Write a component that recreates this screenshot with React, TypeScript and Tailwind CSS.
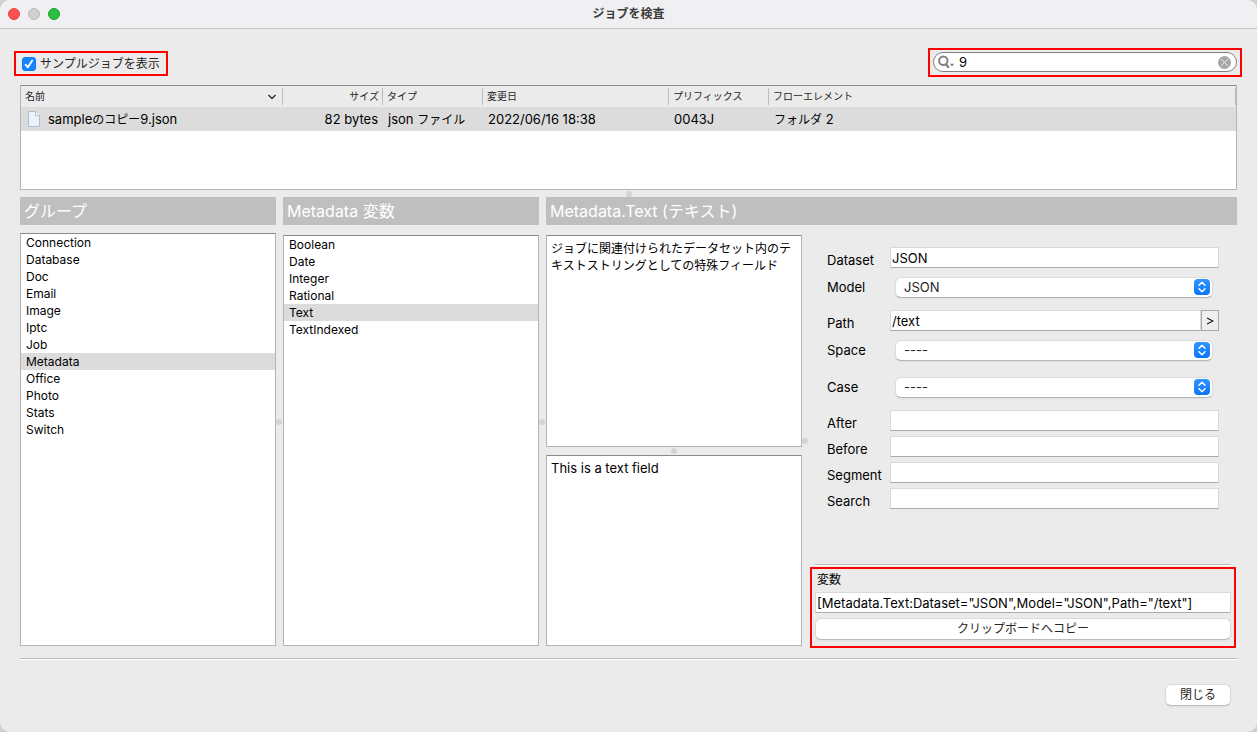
import { useState } from 'react';
import type { ReactNode } from 'react';

const groups = [
  'Connection', 'Database', 'Doc', 'Email', 'Image', 'Iptc',
  'Job', 'Metadata', 'Office', 'Photo', 'Stats', 'Switch',
];

const variables = ['Boolean', 'Date', 'Integer', 'Rational', 'Text', 'TextIndexed'];

const columns = [
  { label: '名前', width: 'w-[262px]' },
  { label: 'サイズ', width: 'w-[100px]' },
  { label: 'タイプ', width: 'w-[100px]' },
  { label: '変更日', width: 'w-[186px]' },
  { label: 'プリフィックス', width: 'w-[100px]' },
  { label: 'フローエレメント', width: '' },
];

const panel = 'bg-white border border-[#b4b4b4] border-t-[#8c8c8c]';
const field = 'h-[21px] min-w-0 bg-white border border-[#d9d9d9] border-b-[#ababab] px-px text-[13px] outline-none';
const pushButton =
  'h-[22px] rounded-md bg-white border border-[#dadada] border-b-[#b9b9b9] text-[12px] leading-4 text-[#262626] shadow-xs';

const Dot = () => <span className="size-1.5 shrink-0 rounded-full bg-[#d4d4d4]" />;

const VerticalSplitter = () => (
  <div className="w-[7px] shrink-0 flex items-center justify-start cursor-col-resize">
    <Dot />
  </div>
);

const PanelTitle = ({ children }: { children: ReactNode }) => (
  <h2 className="h-7 shrink-0 bg-[#bfbfbf] px-1 text-[16px] leading-7 text-white truncate">{children}</h2>
);

// Kana is set one size smaller than the Latin text beside it
const Kana = ({ children }: { children: ReactNode }) => <span className="text-[12px]">{children}</span>;

type ListProps = {
  label: string;
  items: string[];
  selected: string;
  onSelect: (item: string) => void;
};

const List = ({ label, items, selected, onSelect }: ListProps) => (
  <ul aria-label={label} className={`flex-1 text-[12px] leading-[17px] ${panel}`}>
    {items.map((item) => (
      <li key={item}>
        <button
          type="button"
          onClick={() => onSelect(item)}
          className={`block w-full px-[5px] text-left ${item === selected ? 'bg-[#dcdcdc]' : ''}`}
        >
          {item}
        </button>
      </li>
    ))}
  </ul>
);

const TextRow = ({ label, value = '', more = false }: { label: string; value?: string; more?: boolean }) => {
  const id = label.toLowerCase();
  return (
    <div className="flex items-center h-[21px]">
      <label htmlFor={id} className="w-[63px] shrink-0 pt-[5px]">{label}</label>
      <input id={id} type="text" defaultValue={value} className={`flex-1 ${field}`} />
      {more && (
        <button
          type="button"
          aria-label="Build path"
          className="w-[18px] h-[21px] flex items-center justify-center border border-[#a8a8a8] bg-[#efefef]"
        >
          <svg width="8" height="8" viewBox="0 0 8 8" fill="none" stroke="#111" strokeWidth="1.1">
            <path d="M1 1l6 3-6 3" />
          </svg>
        </button>
      )}
    </div>
  );
};

const SelectRow = ({ label, value }: { label: string; value: string }) => {
  const id = label.toLowerCase();
  return (
    <div className="flex items-center h-[21px]">
      <label htmlFor={id} className="w-[68px] shrink-0 pb-px">{label}</label>
      <div className="relative flex-1 mr-1.5">
        <select
          id={id}
          defaultValue={value}
          className="block w-full h-[21px] appearance-none rounded-md bg-white border border-[#dcdcdc] border-b-[#b5b5b5] px-2 text-[13px] leading-[19px] text-[#262626] shadow-xs outline-none"
        >
          <option>{value}</option>
        </select>
        <span className="absolute right-[3px] top-[2px] size-4 rounded bg-gradient-to-b from-[#2f95ff] to-[#0a74f9] pointer-events-none">
          <svg width="16" height="16" viewBox="0 0 16 16" fill="none" stroke="white" strokeWidth="1.5" strokeLinecap="round" strokeLinejoin="round">
            <path d="M5 6.2L8 3.3l3 2.9M5 9.8l3 2.9 3-2.9" />
          </svg>
        </span>
      </div>
    </div>
  );
};

const App = () => {
  const [showSamples, setShowSamples] = useState(true);
  const [query, setQuery] = useState('9');
  const [group, setGroup] = useState('Metadata');
  const [variable, setVariable] = useState('Text');

  return (
    <div className="min-h-screen flex bg-[#cfcfcf] font-['Inter','Noto_Sans_CJK_JP',sans-serif] text-black">
      <div className="flex-1 min-w-0 flex flex-col rounded-[10px] bg-[#ebebeb] overflow-hidden">
        <header className="h-[29px] shrink-0 grid grid-cols-3 items-center border-b border-[#c3c3c3] bg-[#f0eff1] px-2">
          <div className="flex gap-2">
            <button type="button" aria-label="閉じる" className="size-3 rounded-full border border-[#e0443e] bg-[#fe5050]" />
            <button type="button" aria-label="しまう" className="size-3 rounded-full border border-[#b9b9bb] bg-[#d1d0d2]" />
            <button type="button" aria-label="拡大" className="size-3 rounded-full border border-[#1f9f31] bg-[#2ac040]" />
          </div>
          <h1 className="text-center text-[12px] leading-4 font-bold text-[#3c3c3c]">ジョブを検査</h1>
        </header>

        <div className="flex items-end justify-between pl-3.5 pr-[15px] pt-[19px]">
          <label className="h-[25px] mb-px flex items-center gap-1 border-2 border-[#ff0000] pl-1.5 pr-1.5 text-[12px] text-[#262626]">
            <input
              type="checkbox"
              checked={showSamples}
              onChange={(e) => setShowSamples(e.target.checked)}
              className="peer sr-only"
            />
            <span className="size-3.5 rounded-[3px] border border-[#b5b5b5] bg-white peer-checked:border-[#0a7aff] peer-checked:bg-[#1785ff]">
              <svg width="12" height="12" viewBox="0 0 12 12" fill="none" stroke="white" strokeWidth="1.8" strokeLinecap="round" strokeLinejoin="round">
                <path d="M2.6 6.6l2.3 2.7L9.2 2.6" />
              </svg>
            </span>
            サンプルジョブを表示
          </label>

          <div className="w-[314px] border-2 border-[#ff0000] px-[3px] pt-[2px] pb-[3px]">
            <div className="h-5 flex items-center rounded-full border border-[#808080] bg-white pl-1 pr-[5px]">
              <svg width="18" height="14" viewBox="0 0 18 14" fill="none" className="shrink-0">
                <circle cx="5.3" cy="5.8" r="4.2" stroke="#808080" strokeWidth="2" />
                <path d="M7.800 9l3 3.800" stroke="#808080" strokeWidth="2.2" />
                <path d="M12 8.800h4.200L14 11.400z" fill="#808080" />
              </svg>
              <input
                type="text"
                aria-label="検索"
                value={query}
                onChange={(e) => setQuery(e.target.value)}
                className="flex-1 min-w-0 pl-[3px] text-[13px] leading-4 outline-none"
              />
              <button type="button" aria-label="クリア" onClick={() => setQuery('')}>
                <svg width="13" height="13" viewBox="0 0 13 13" className="block">
                  <circle cx="6.5" cy="6.5" r="6.5" fill="#a6a6a6" />
                  <path d="M3.2 3.2l6.6 6.6M9.8 3.2L3.2 9.8" stroke="#f2f2f2" />
                </svg>
              </button>
            </div>
          </div>
        </div>

        <main className="flex-1 flex flex-col px-5 pt-2">
          <div className={`h-[105px] shrink-0 ${panel}`}>
            <table className="w-full table-fixed border-collapse">
              <thead>
                <tr className="h-[21px] bg-[#ebebeb]">
                  {columns.map((col, i) => (
                    <th key={col.label} scope="col" className={`p-0 align-middle ${col.width}`}>
                      <div
                        className={`h-[17px] flex items-center border-r border-[#bcbcbc] pl-1 pr-[3px] text-[10px] font-normal text-[#262626] ${
                          i === 1 ? 'justify-end' : 'justify-between'
                        }`}
                      >
                        {col.label}
                        {i === 0 && (
                          <svg width="14" height="8" viewBox="0 0 14 8" fill="none" stroke="#333" strokeWidth="1.5">
                            <path d="M3.5 2L7 5.5 10.5 2" />
                          </svg>
                        )}
                      </div>
                    </th>
                  ))}
                </tr>
              </thead>
              <tbody className="text-[13px] leading-5 whitespace-nowrap">
                <tr className="h-6 bg-[#dcdcdc]">
                  <td className="p-0">
                    <div className="flex items-center gap-2 pl-[7px]">
                      <svg width="12" height="16" viewBox="0 0 12 16" fill="#eaf3fd" stroke="#b3bbc6">
                        <path d="M.5.5h7l4 4v11H.5z" />
                        <path d="M7.5.5v4h4" fill="white" />
                      </svg>
                      <span>sample<Kana>のコピー</Kana>9.json</span>
                    </div>
                  </td>
                  <td className="p-0 pr-[5px] text-right">82 bytes</td>
                  <td className="p-0 pl-[5px]">json <Kana>ファイル</Kana></td>
                  <td className="p-0 pl-[5px]">2022/06/16 18:38</td>
                  <td className="p-0 pl-[5px]">0043J</td>
                  <td className="p-0 pl-[5px]"><Kana>フォルダ</Kana> 2</td>
                </tr>
              </tbody>
            </table>
          </div>

          <div className="h-[7px] shrink-0 flex items-center justify-center cursor-row-resize">
            <Dot />
          </div>

          <div className="flex-1 flex">
            <section className="w-64 shrink-0 flex flex-col gap-2">
              <PanelTitle>グループ</PanelTitle>
              <List label="グループ" items={groups} selected={group} onSelect={setGroup} />
            </section>

            <VerticalSplitter />

            <section className="w-64 shrink-0 flex flex-col gap-2.5">
              <PanelTitle>Metadata 変数</PanelTitle>
              <List label="Metadata 変数" items={variables} selected={variable} onSelect={setVariable} />
            </section>

            <VerticalSplitter />

            <section className="flex-1 min-w-0 flex flex-col gap-2.5">
              <PanelTitle>Metadata.Text (テキスト)</PanelTitle>
              <div className="flex-1 flex">
                <div className="w-64 shrink-0 flex flex-col">
                  <div className={`flex-[212] px-1 pt-1 text-[12px] leading-[17px] ${panel}`}>
                    ジョブに関連付けられたデータセット内のテキストストリングとしての特殊フィールド
                  </div>
                  <div className="h-2 shrink-0 flex items-center justify-center cursor-row-resize">
                    <Dot />
                  </div>
                  <div className={`flex-[190] px-1 pt-1 text-[13px] leading-[17px] ${panel}`}>
                    This is a text field
                  </div>
                </div>

                <VerticalSplitter />

                <div className="flex-1 min-w-0 flex flex-col">
                  <form className="flex flex-col gap-3 pl-[18px] pr-[18px] pt-3 text-[13px] leading-4">
                    <div className="flex flex-col gap-[9px]">
                      <TextRow label="Dataset" value="JSON" />
                      <SelectRow label="Model" value="JSON" />
                    </div>
                    <div className="flex flex-col gap-[9px]">
                      <TextRow label="Path" value="/text" more />
                      <SelectRow label="Space" value="----" />
                    </div>
                    <div className="pt-1">
                      <SelectRow label="Case" value="----" />
                    </div>
                    <div className="flex flex-col gap-[5px]">
                      <TextRow label="After" />
                      <TextRow label="Before" />
                      <TextRow label="Segment" />
                      <TextRow label="Search" />
                    </div>
                  </form>

                  <div className="mt-auto ml-1.5 mr-1.5 mb-px border-t border-[#b9b9b9] border-b border-b-white" />
                  <div className="-mb-0.5 ml-px mr-px flex flex-col gap-[5px] border-2 border-[#ff0000] px-[3px] pb-1.5 text-[12px]">
                    <div className="flex flex-col">
                      <label htmlFor="variable" className="h-[23px] px-0.5 leading-[22px]">変数</label>
                      <input
                        id="variable"
                        type="text"
                        readOnly
                        value={'[Metadata.Text:Dataset="JSON",Model="JSON",Path="/text"]'}
                        className={field}
                      />
                    </div>
                    <button type="button" className={pushButton}>クリップボードへコピー</button>
                  </div>
                </div>
              </div>
            </section>
          </div>
        </main>

        <footer className="px-5 pt-3">
          <div className="border-t border-[#b9b9b9] border-b border-b-white" />
          <div className="flex justify-end pt-6 pb-[26px] pr-1.5">
            <button type="button" className={`px-3.5 ${pushButton}`}>閉じる</button>
          </div>
        </footer>
      </div>
    </div>
  );
};

export default App;
